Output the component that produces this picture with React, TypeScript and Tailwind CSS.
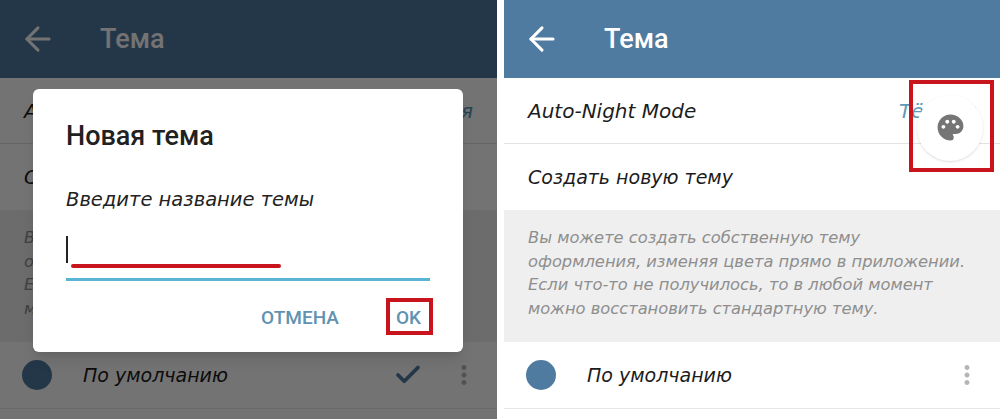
import React from "react";
import { ArrowLeft, Check } from "lucide-react";
import { MdPalette, MdMoreVert } from "react-icons/md";

const hand = "font-['DejaVu_Sans'] italic";

const noteLines = [
  "Вы можете создать собственную тему",
  "оформления, изменяя цвета прямо в приложении.",
  "Если что-то не получилось, то в любой момент",
  "можно восстановить стандартную тему.",
];

const ThemeScreen = ({ selected }: { selected?: boolean }) => {
  return (
    <div className="flex h-full w-full flex-col bg-white">
      <div className="flex h-[78px] shrink-0 items-center bg-[#507ba0] pl-[19px] text-white">
        <ArrowLeft size={38} strokeWidth={1.9} />
        <span className="ml-[43px] font-['Roboto'] text-[27px] font-medium">Тема</span>
      </div>

      <div className="flex h-[66px] shrink-0 items-center justify-between border-b border-[#e2e2e2] pl-6 pr-[24px]">
        <span className={`${hand} text-[20px] text-[#1c1c1c]`}>Auto-Night Mode</span>
        <span className={`${hand} text-[20px] text-[#5b9ab8]`}>Тёмная</span>
      </div>

      <div className="flex h-[66px] shrink-0 items-center pl-6">
        <span className={`${hand} text-[19px] text-[#1c1c1c]`}>Создать новую тему</span>
      </div>

      <div className="h-[132px] shrink-0 bg-[#efefef] pl-6 pt-4">
        {noteLines.map((line) => (
          <div key={line} className={`${hand} whitespace-nowrap text-[16.3px] leading-[23.5px] text-[#8e8e8e]`}>
            {line}
          </div>
        ))}
      </div>

      <div className="flex h-[67px] shrink-0 items-center border-b border-[#e6e6e6] pl-[22px] pr-[19px]">
        <div className="h-[30px] w-[30px] rounded-full bg-[#507ba0]" />
        <span className={`${hand} ml-[31px] text-[19px] text-[#1c1c1c]`}>По умолчанию</span>
        <div className="ml-auto flex items-center gap-[26px]">
          {selected && <Check size={30} strokeWidth={3} className="text-[#507ba0]" />}
          <MdMoreVert size={30} className="-mr-[1px] text-[#b5b5b5]" />
        </div>
      </div>
    </div>
  );
};

const App = () => {
  return (
    <div className="flex h-[419px] w-[1000px] justify-between overflow-hidden bg-white">
      <div className="relative h-full w-[497px]">
        <ThemeScreen selected />
        <div className="absolute inset-0 bg-black/55" />

        <div className="absolute left-[33px] top-[89px] h-[263px] w-[430px] rounded-md bg-white pl-[33px] shadow-lg">
          <div className="pt-[27px] font-['Roboto'] text-[27px] font-medium text-[#212121]">Новая тема</div>
          <div className={`${hand} mt-[28px] text-[19.5px] text-[#222]`}>Введите название темы</div>

          <div className="relative mt-[22px] h-[45px] w-[364px] border-b-[3px] border-[#5bb4d3]">
            <div className="h-[27px] w-[2px] bg-[#222]" />
            <div className="absolute left-[5px] top-[28px] h-[4px] w-[210px] rounded-full bg-[#c8141c]" />
          </div>

          <div className="mt-[23px] flex items-center justify-end pr-[42px] font-['Roboto'] text-[19px] font-medium text-[#5f93b1]">
            <span>ОТМЕНА</span>
            <span className="relative ml-[57px]">
              OK
              <span className="absolute -left-[10px] -right-[12px] -top-[6px] -bottom-[3px] border-4 border-[#c8141c]" />
            </span>
          </div>
        </div>
      </div>

      <div className="relative h-full w-[496px]">
        <ThemeScreen />
        <div className="absolute left-[405px] top-[80px] flex h-[92px] w-[85px] items-center justify-start border-4 border-[#c8141c] pl-[4px] pt-[3px]">
          <div className="flex h-[66px] w-[66px] items-center justify-center rounded-full bg-white shadow-sm">
            <MdPalette size={31} className="text-[#757575]" />
          </div>
        </div>
      </div>
    </div>
  );
};

export default App;
